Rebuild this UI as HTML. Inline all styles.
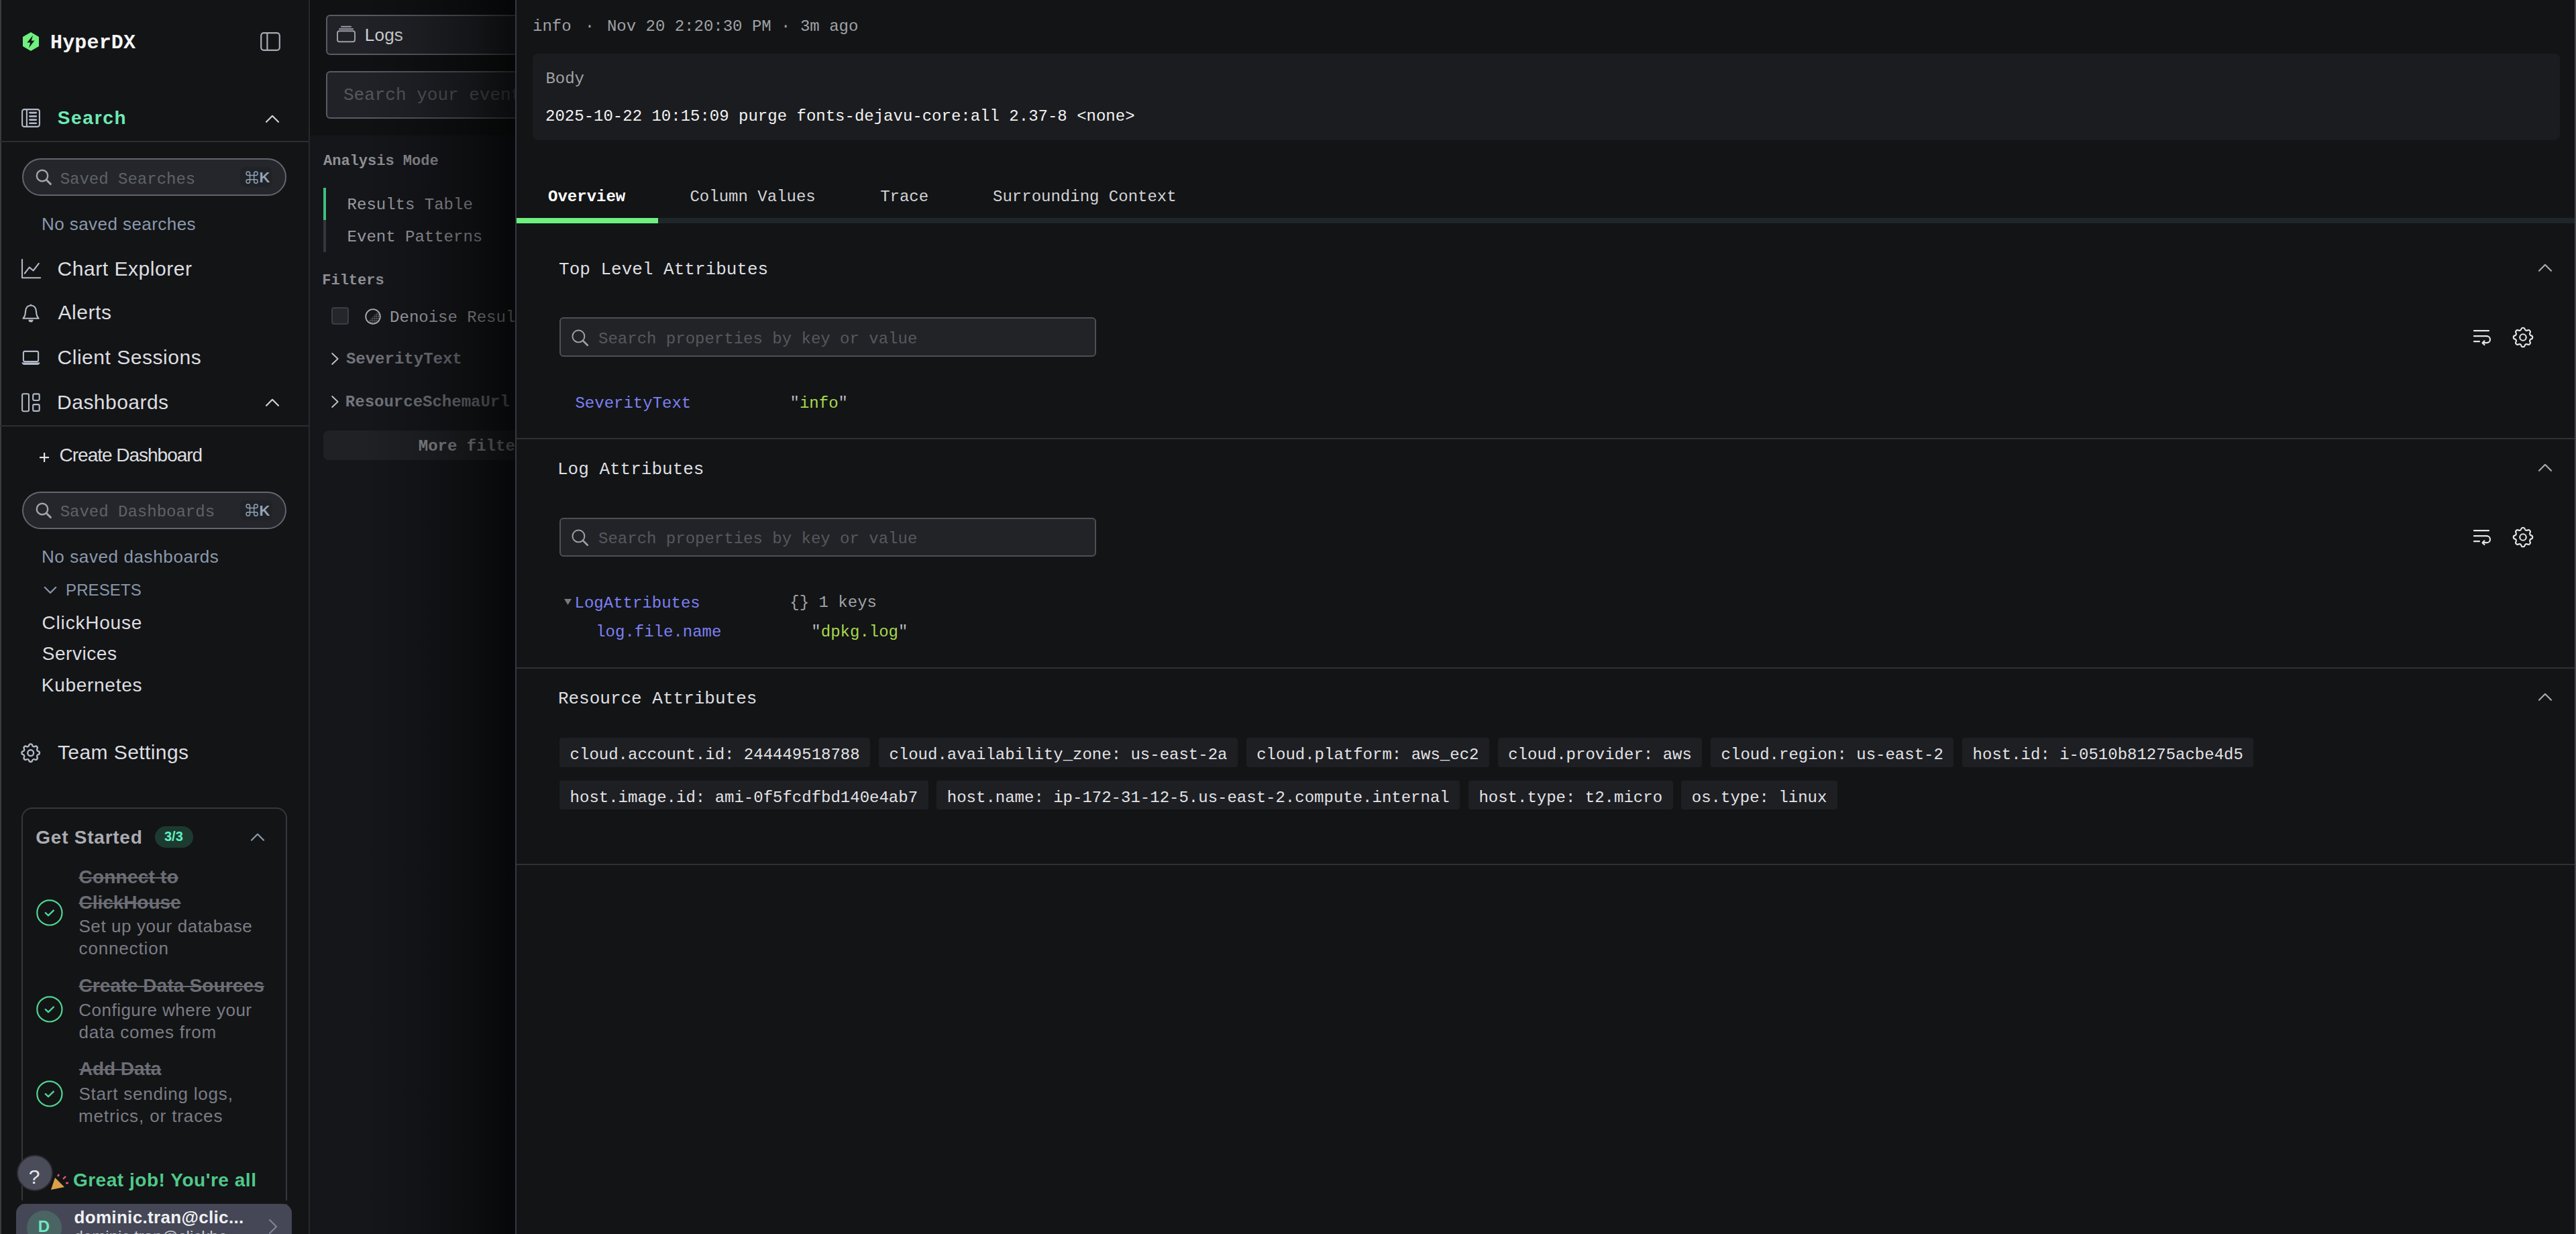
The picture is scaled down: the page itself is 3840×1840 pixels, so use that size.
<!DOCTYPE html>
<html><head><meta charset="utf-8">
<style>
html,body{margin:0;padding:0;background:#131416;overflow:hidden;}
#root{position:relative;width:1920px;height:920px;overflow:hidden;background:#131416;font-family:"Liberation Sans",sans-serif;}
@media (min-width:3000px){#root{zoom:2;}}
.a{position:absolute;}
.t{position:absolute;line-height:1;white-space:nowrap;}
svg{position:absolute;overflow:visible;}
.ico{fill:none;stroke-linecap:round;stroke-linejoin:round;}
.pill{position:absolute;border:1px solid #64646e;background:#25262b;border-radius:14px;box-sizing:border-box;}
.kbd{position:absolute;background:#1f2226;border-radius:4px;}
.inp{position:absolute;background:#222327;border:1px solid #4d4f56;border-radius:3px;box-sizing:border-box;}
.chip{position:absolute;height:21.8px;background:#1e1f23;border-radius:2px;color:#e2e3e6;font-size:12px;line-height:25.6px;padding:0 7.8px;font-family:"Liberation Mono",monospace;white-space:nowrap;box-sizing:border-box;}
</style></head><body><div id="root">
<div class="a" style="left:0;top:0;width:230px;height:920px;background:#131416;"></div>
<div class="a" style="left:0;top:0;width:1px;height:920px;background:#3a3b3f;"></div>
<div class="a" style="left:230px;top:0;width:1px;height:920px;background:#25282c;"></div>
<svg style="left:17px;top:24px" width="12" height="14" viewBox="0 0 12 14"><path d="M6 0 L12 3.5 L12 10.5 L6 14 L0 10.5 L0 3.5 Z" fill="#6ff07f"/><path d="M7.5 2.4 L3.2 7.8 L5.6 7.7 L4.5 11.7 L8.7 6.3 L6.4 6.4 Z" fill="#131416"/></svg>
<div class="t" style="left:37.52px;top:24.51px;font-family:'Liberation Mono',monospace;font-size:15px;font-weight:bold;color:#f4f5f6;letter-spacing:0.079px;">HyperDX</div>
<svg style="left:194px;top:24px" width="15" height="14" viewBox="0 0 15 14"><rect x="0.6" y="0.6" width="13.8" height="12.8" rx="2" class="ico" stroke="#a7aab2" stroke-width="1.1"/><line x1="5.2" y1="0.6" x2="5.2" y2="13.4" class="ico" stroke="#a7aab2" stroke-width="1.1"/></svg>
<svg style="left:16px;top:81px" width="14" height="14" viewBox="0 0 14 14"><rect x="0.55" y="0.55" width="12.9" height="12.9" rx="1.6" class="ico" stroke-width="1.05" stroke="#b2b9c7"/><line x1="3.95" y1="0.6" x2="3.95" y2="13.4" class="ico" stroke-width="1.05" stroke="#b2b9c7"/><line x1="6.2" y1="3.05" x2="10.9" y2="3.05" class="ico" stroke="#b2b9c7" stroke-width="1.3"/><line x1="6.2" y1="5.7" x2="10.9" y2="5.7" class="ico" stroke="#b2b9c7" stroke-width="1.3"/><line x1="6.2" y1="8.3" x2="10.9" y2="8.3" class="ico" stroke="#b2b9c7" stroke-width="1.3"/><line x1="6.2" y1="10.9" x2="10.9" y2="10.9" class="ico" stroke="#b2b9c7" stroke-width="1.3"/></svg>
<div class="t" style="left:42.83px;top:80.95px;font-family:'Liberation Sans',sans-serif;font-size:14px;font-weight:bold;color:#6ee9b3;letter-spacing:0.864px;">Search</div>
<svg style="left:198px;top:85.5px" width="10" height="6" viewBox="0 0 10 6"><polyline points="0.5,5.4 5,0.9 9.5,5.4" class="ico" stroke="#d0d2d6" stroke-width="1.1"/></svg>
<div class="a" style="left:0;top:105px;width:230px;height:1px;background:#2c2e33;"></div>
<div class="pill" style="left:16.5px;top:118.0px;width:197px;height:28px;"></div>
<svg style="left:26.5px;top:126.0px" width="12" height="12" viewBox="0 0 12 12"><circle cx="5" cy="5" r="4.1" class="ico" stroke="#a0a4ac" stroke-width="1.2"/><line x1="8.1" y1="8.1" x2="11.2" y2="11.2" class="ico" stroke="#a0a4ac" stroke-width="1.5"/></svg>
<div class="kbd" style="left:179px;top:124.5px;width:24px;height:15px;"></div>
<div class="t" style="left:44.82px;top:127.81px;font-family:'Liberation Mono',monospace;font-size:12px;font-weight:normal;color:#5f6268;">Saved Searches</div>
<svg style="left:183.6px;top:127.8px" width="8.6" height="8.6" viewBox="0 0 10 10"><path d="M3.2 3.2 V1.6 A1.6 1.6 0 1 0 1.6 3.2 H8.4 A1.6 1.6 0 1 0 6.8 1.6 V8.4 A1.6 1.6 0 1 0 8.4 6.8 H1.6 A1.6 1.6 0 1 0 3.2 8.4 Z" fill="none" stroke="#94a3b8" stroke-width="0.8"/></svg>
<div class="t" style="left:193.19px;top:127.09px;font-family:'Liberation Sans',sans-serif;font-size:11px;font-weight:bold;color:#94a3b8;">K</div>
<div class="t" style="left:30.96px;top:160.49px;font-family:'Liberation Sans',sans-serif;font-size:13px;font-weight:normal;color:#8a99ad;letter-spacing:0.223px;">No saved searches</div>
<svg style="left:16px;top:193.4px" width="14" height="14" viewBox="0 0 14 14"><polyline points="0.5,0 0.5,13.6 14.1,13.6" class="ico" stroke-width="1.05" stroke="#b2b9c7"/><polyline points="2.4,10.3 5.9,5.8 8.8,8.25 12.9,2.9" class="ico" stroke-width="1.05" stroke="#b2b9c7"/></svg>
<div class="t" style="left:42.75px;top:192.80px;font-family:'Liberation Sans',sans-serif;font-size:15px;font-weight:normal;color:#dddee1;letter-spacing:0.273px;">Chart Explorer</div>
<svg style="left:16px;top:226px" width="14" height="15" viewBox="0 0 14 15"><path d="M7 1.6 C4.3 1.8 3.1 3.6 3 6.3 C2.9 8.6 2.6 10 1.2 11.4 L12.8 11.4 C11.4 10 11.1 8.6 11 6.3 C10.9 3.6 9.7 1.8 7 1.6 Z" class="ico" stroke-width="1.05" stroke="#b2b9c7"/><path d="M5.2 12.4 L8.8 12.4 A1.8 1.8 0 0 1 5.2 12.4 Z" fill="#b2b9c7"/><path d="M6.1 1.9 L7 0.6 L7.9 1.9 Z" fill="#b2b9c7"/></svg>
<div class="t" style="left:43.20px;top:225.60px;font-family:'Liberation Sans',sans-serif;font-size:15px;font-weight:normal;color:#dddee1;letter-spacing:0.290px;">Alerts</div>
<svg style="left:16px;top:261px" width="14" height="11" viewBox="0 0 14 11"><rect x="1.45" y="0.95" width="11.1" height="7.6" rx="1" class="ico" stroke-width="1.05" stroke="#b2b9c7"/><path d="M0.2 9.3 L13.8 9.3 C13.6 10.4 13 10.95 12.2 10.95 L1.8 10.95 C1 10.95 0.4 10.4 0.2 9.3 Z" fill="#b2b9c7"/></svg>
<div class="t" style="left:42.75px;top:258.95px;font-family:'Liberation Sans',sans-serif;font-size:15px;font-weight:normal;color:#dddee1;letter-spacing:0.266px;">Client Sessions</div>
<svg style="left:16px;top:293px" width="14" height="14" viewBox="0 0 14 14"><rect x="0.55" y="0.6" width="4.95" height="13" rx="1" class="ico" stroke-width="1.05" stroke="#b2b9c7"/><rect x="8.6" y="0.7" width="4.75" height="4.8" rx="1" class="ico" stroke-width="1.05" stroke="#b2b9c7"/><rect x="8.6" y="8.55" width="4.75" height="4.9" rx="1" class="ico" stroke-width="1.05" stroke="#b2b9c7"/></svg>
<div class="t" style="left:42.55px;top:292.30px;font-family:'Liberation Sans',sans-serif;font-size:15px;font-weight:normal;color:#dddee1;letter-spacing:0.236px;">Dashboards</div>
<svg style="left:198px;top:297px" width="10" height="6" viewBox="0 0 10 6"><polyline points="0.5,5.4 5,0.9 9.5,5.4" class="ico" stroke="#d0d2d6" stroke-width="1.1"/></svg>
<div class="a" style="left:0;top:317px;width:230px;height:1px;background:#2c2e33;"></div>
<svg style="left:29.5px;top:337.6px" width="7" height="7" viewBox="0 0 7 7"><line x1="3.55" y1="0" x2="3.55" y2="7" stroke="#dfe1e5" stroke-width="1.1"/><line x1="0" y1="3.55" x2="7" y2="3.55" stroke="#dfe1e5" stroke-width="1.1"/></svg>
<div class="t" style="left:44.30px;top:332.65px;font-family:'Liberation Sans',sans-serif;font-size:14px;font-weight:normal;color:#dddee1;letter-spacing:-0.508px;">Create Dashboard</div>
<div class="pill" style="left:16.5px;top:366.35px;width:197px;height:28px;"></div>
<svg style="left:26.5px;top:374.35px" width="12" height="12" viewBox="0 0 12 12"><circle cx="5" cy="5" r="4.1" class="ico" stroke="#a0a4ac" stroke-width="1.2"/><line x1="8.1" y1="8.1" x2="11.2" y2="11.2" class="ico" stroke="#a0a4ac" stroke-width="1.5"/></svg>
<div class="kbd" style="left:179px;top:372.85px;width:24px;height:15px;"></div>
<div class="t" style="left:44.82px;top:376.06px;font-family:'Liberation Mono',monospace;font-size:12px;font-weight:normal;color:#5f6268;">Saved Dashboards</div>
<svg style="left:183.6px;top:376.1px" width="8.6" height="8.6" viewBox="0 0 10 10"><path d="M3.2 3.2 V1.6 A1.6 1.6 0 1 0 1.6 3.2 H8.4 A1.6 1.6 0 1 0 6.8 1.6 V8.4 A1.6 1.6 0 1 0 8.4 6.8 H1.6 A1.6 1.6 0 1 0 3.2 8.4 Z" fill="none" stroke="#94a3b8" stroke-width="0.8"/></svg>
<div class="t" style="left:193.19px;top:375.34px;font-family:'Liberation Sans',sans-serif;font-size:11px;font-weight:bold;color:#94a3b8;">K</div>
<div class="t" style="left:30.96px;top:408.49px;font-family:'Liberation Sans',sans-serif;font-size:13px;font-weight:normal;color:#8a99ad;letter-spacing:0.306px;">No saved dashboards</div>
<svg style="left:33px;top:437.5px" width="9" height="5" viewBox="0 0 9 5"><polyline points="0.4,0.4 4.5,4.5 8.6,0.4" class="ico" stroke="#8a99ad" stroke-width="1.1"/></svg>
<div class="t" style="left:49.04px;top:433.84px;font-family:'Liberation Sans',sans-serif;font-size:12px;font-weight:normal;color:#8a99ad;letter-spacing:0.045px;">PRESETS</div>
<div class="t" style="left:31.30px;top:457.45px;font-family:'Liberation Sans',sans-serif;font-size:14px;font-weight:normal;color:#dddee1;letter-spacing:0.396px;">ClickHouse</div>
<div class="t" style="left:31.37px;top:480.65px;font-family:'Liberation Sans',sans-serif;font-size:14px;font-weight:normal;color:#dddee1;letter-spacing:0.276px;">Services</div>
<div class="t" style="left:30.88px;top:504.05px;font-family:'Liberation Sans',sans-serif;font-size:14px;font-weight:normal;color:#dddee1;letter-spacing:0.361px;">Kubernetes</div>
<svg style="left:14.2px;top:552.3px" width="17.7" height="17.7" viewBox="0 0 24 24"><path d="M10.325 4.317c.426 -1.756 2.924 -1.756 3.35 0a1.724 1.724 0 0 0 2.573 1.066c1.543 -.94 3.31 .826 2.37 2.37a1.724 1.724 0 0 0 1.065 2.572c1.756 .426 1.756 2.924 0 3.35a1.724 1.724 0 0 0 -1.066 2.573c.94 1.543 -.826 3.31 -2.37 2.37a1.724 1.724 0 0 0 -2.572 1.065c-.426 1.756 -2.924 1.756 -3.35 0a1.724 1.724 0 0 0 -2.573 -1.066c-1.543 .94 -3.31 -.826 -2.37 -2.37a1.724 1.724 0 0 0 -1.065 -2.572c-1.756 -.426 -1.756 -2.924 0 -3.35a1.724 1.724 0 0 0 1.066 -2.573c-.94 -1.543 .826 -3.31 2.37 -2.37c1 .608 2.296 .07 2.572 -1.065z" class="ico" stroke="#b2b9c7" stroke-width="1.6"/><circle cx="12" cy="12" r="3" class="ico" stroke="#b2b9c7" stroke-width="1.6"/></svg>
<div class="t" style="left:42.95px;top:553.70px;font-family:'Liberation Sans',sans-serif;font-size:15px;font-weight:normal;color:#dddee1;letter-spacing:0.212px;">Team Settings</div>
<div class="a" style="left:16.2px;top:602.2px;width:197.8px;height:330px;border:1px solid #35373d;border-radius:8px;box-sizing:border-box;"></div>
<div class="t" style="left:26.64px;top:617.40px;font-family:'Liberation Sans',sans-serif;font-size:14px;font-weight:bold;color:#abacb2;letter-spacing:0.381px;">Get Started</div>
<div class="a" style="left:115.5px;top:616px;width:28.5px;height:16px;border-radius:8px;background:#1d3a30;"></div>
<div class="t" style="left:122.50px;top:618.53px;font-family:'Liberation Sans',sans-serif;font-size:10px;font-weight:bold;color:#62efc2;">3/3</div>
<svg style="left:187px;top:621px" width="10" height="6" viewBox="0 0 10 6"><polyline points="0.5,5.4 5,0.9 9.5,5.4" class="ico" stroke="#8a9bb0" stroke-width="1.1"/></svg>
<svg style="left:27px;top:670.45px" width="20" height="20" viewBox="0 0 20 20"><circle cx="9.95" cy="9.95" r="9.3" fill="none" stroke="#4fd691" stroke-width="1.1"/><polyline points="6.9,10.1 9,12.1 12.9,8.3" fill="none" stroke="#4fd691" stroke-width="1.2" stroke-linecap="round" stroke-linejoin="round"/></svg>
<svg style="left:27px;top:742.6px" width="20" height="20" viewBox="0 0 20 20"><circle cx="9.95" cy="9.95" r="9.3" fill="none" stroke="#4fd691" stroke-width="1.1"/><polyline points="6.9,10.1 9,12.1 12.9,8.3" fill="none" stroke="#4fd691" stroke-width="1.2" stroke-linecap="round" stroke-linejoin="round"/></svg>
<svg style="left:27px;top:805.3px" width="20" height="20" viewBox="0 0 20 20"><circle cx="9.95" cy="9.95" r="9.3" fill="none" stroke="#4fd691" stroke-width="1.1"/><polyline points="6.9,10.1 9,12.1 12.9,8.3" fill="none" stroke="#4fd691" stroke-width="1.2" stroke-linecap="round" stroke-linejoin="round"/></svg>
<div class="t" style="left:58.74px;top:647.15px;font-family:'Liberation Sans',sans-serif;font-size:14px;font-weight:bold;color:#6c6d75;letter-spacing:0.116px;text-decoration:line-through;text-decoration-thickness:1px;">Connect to</div>
<div class="t" style="left:58.74px;top:666.15px;font-family:'Liberation Sans',sans-serif;font-size:14px;font-weight:bold;color:#6c6d75;letter-spacing:-0.020px;text-decoration:line-through;text-decoration-thickness:1px;">ClickHouse</div>
<div class="t" style="left:58.71px;top:684.14px;font-family:'Liberation Sans',sans-serif;font-size:13px;font-weight:normal;color:#7b7c85;letter-spacing:0.295px;">Set up your database</div>
<div class="t" style="left:58.78px;top:700.74px;font-family:'Liberation Sans',sans-serif;font-size:13px;font-weight:normal;color:#7b7c85;letter-spacing:0.423px;">connection</div>
<div class="t" style="left:58.74px;top:728.15px;font-family:'Liberation Sans',sans-serif;font-size:14px;font-weight:bold;color:#6c6d75;letter-spacing:0.067px;text-decoration:line-through;text-decoration-thickness:1px;">Create Data Sources</div>
<div class="t" style="left:58.65px;top:746.34px;font-family:'Liberation Sans',sans-serif;font-size:13px;font-weight:normal;color:#7b7c85;letter-spacing:0.240px;">Configure where your</div>
<div class="t" style="left:58.78px;top:762.99px;font-family:'Liberation Sans',sans-serif;font-size:13px;font-weight:normal;color:#7b7c85;letter-spacing:0.394px;">data comes from</div>
<div class="t" style="left:58.95px;top:790.15px;font-family:'Liberation Sans',sans-serif;font-size:14px;font-weight:bold;color:#6c6d75;letter-spacing:-0.036px;text-decoration:line-through;text-decoration-thickness:1px;">Add Data</div>
<div class="t" style="left:58.71px;top:808.79px;font-family:'Liberation Sans',sans-serif;font-size:13px;font-weight:normal;color:#7b7c85;letter-spacing:0.392px;">Start sending logs,</div>
<div class="t" style="left:58.45px;top:825.49px;font-family:'Liberation Sans',sans-serif;font-size:13px;font-weight:normal;color:#7b7c85;letter-spacing:0.446px;">metrics, or traces</div>
<div class="a" style="left:12.5px;top:861px;width:27px;height:27px;border-radius:50%;background:#4a4c5a;border:1px solid #2c2d33;box-sizing:border-box;"></div>
<div class="t" style="left:21.40px;top:869.80px;font-family:'Liberation Sans',sans-serif;font-size:15px;font-weight:normal;color:#e8e9ec;">?</div>
<div class="t" style="left:54.44px;top:873.15px;font-family:'Liberation Sans',sans-serif;font-size:14px;font-weight:bold;color:#4fc98a;letter-spacing:0.268px;">Great job! You're all</div>
<svg style="left:37px;top:875px" width="15" height="13" viewBox="0 0 15 13"><path d="M1 12 L4 3 L11 10 Z" fill="#d9a04a"/><path d="M6 2 l1 -1.5 M10 4 l2 -2 M12 7 l2 0" stroke="#e05a7a" stroke-width="1.2"/></svg>
<div class="a" style="left:12.2px;top:897.3px;width:205.5px;height:40px;border-radius:7px;background:#454756;"></div>
<div class="a" style="left:20px;top:902.5px;width:26px;height:26px;border-radius:50%;background:#4a6464;"></div>
<div class="t" style="left:28.42px;top:908.34px;font-family:'Liberation Sans',sans-serif;font-size:12px;font-weight:bold;color:#6ee9c0;">D</div>
<div class="t" style="left:55.23px;top:900.79px;font-family:'Liberation Sans',sans-serif;font-size:13px;font-weight:bold;color:#f0f1f3;letter-spacing:0.168px;">dominic.tran@clic...</div>
<div class="t" style="left:55.27px;top:915.84px;font-family:'Liberation Sans',sans-serif;font-size:12px;font-weight:normal;color:#c6c8cf;">dominic.tran@clickho...</div>
<svg style="left:200.5px;top:909px" width="6" height="11" viewBox="0 0 6 11"><polyline points="0.5,0.5 5.5,5.5 0.5,10.5" class="ico" stroke-width="1.05" stroke="#80869a"/></svg>
<div class="a" style="left:12.2px;top:895px;width:205.5px;height:2.3px;background:#131416;"></div>
<div class="a" style="left:231px;top:0;width:153px;height:920px;background:#15161a;"></div>
<div class="a" style="left:231px;top:0;width:153px;height:100.8px;background:#101113;"></div>
<div class="inp" style="left:243.2px;top:11px;width:200px;height:30px;background:#212227;border-color:#595b65;border-radius:3px;"></div>
<svg style="left:251px;top:19.5px" width="14" height="12" viewBox="0 0 14 12"><line x1="3.5" y1="0.4" x2="10.5" y2="0.4" class="ico" stroke="#9c9ea6" stroke-width="1"/><line x1="2" y1="2.1" x2="12" y2="2.1" class="ico" stroke="#9c9ea6" stroke-width="1"/><rect x="0.5" y="3.6" width="13" height="8" rx="1.5" class="ico" stroke="#9c9ea6" stroke-width="1"/></svg>
<div class="t" style="left:271.86px;top:19.64px;font-family:'Liberation Sans',sans-serif;font-size:13px;font-weight:normal;color:#d4d5d9;letter-spacing:0.128px;">Logs</div>
<div class="inp" style="left:243.2px;top:53.2px;width:200px;height:35.5px;background:#212227;border-color:#595b65;border-radius:3px;"></div>
<div class="t" style="left:255.98px;top:64.49px;font-family:'Liberation Mono',monospace;font-size:13px;font-weight:normal;color:#56585f;">Search your event</div>
<div class="t" style="left:241.00px;top:115.07px;font-family:'Liberation Mono',monospace;font-size:11px;font-weight:bold;color:#8f9096;">Analysis Mode</div>
<div class="a" style="left:241px;top:140px;width:2px;height:24px;background:#3dbf7f;"></div>
<div class="a" style="left:241px;top:164px;width:2px;height:24px;background:#34363b;"></div>
<div class="t" style="left:258.79px;top:146.91px;font-family:'Liberation Mono',monospace;font-size:12px;font-weight:normal;color:#9a9ba1;">Results Table</div>
<div class="t" style="left:258.79px;top:170.76px;font-family:'Liberation Mono',monospace;font-size:12px;font-weight:normal;color:#9a9ba1;">Event Patterns</div>
<div class="t" style="left:240.12px;top:203.87px;font-family:'Liberation Mono',monospace;font-size:11px;font-weight:bold;color:#8f9096;">Filters</div>
<div class="a" style="left:247px;top:229px;width:12.8px;height:12.8px;border-radius:2px;background:#25262b;border:1px solid #3b3d43;box-sizing:border-box;"></div>
<svg style="left:271.8px;top:229.8px" width="12" height="12" viewBox="0 0 12 12"><defs><pattern id="hp" width="1.4" height="1.4" patternUnits="userSpaceOnUse"><rect width="0.7" height="0.7" fill="#a0a2a8"/></pattern></defs><path d="M10 2 A5.4 5.4 0 0 1 2 10 Z" fill="url(#hp)"/><circle cx="6" cy="6" r="5.4" fill="none" stroke="#b0b2b8" stroke-width="0.9"/></svg>
<div class="t" style="left:290.54px;top:231.11px;font-family:'Liberation Mono',monospace;font-size:12px;font-weight:normal;color:#a3a4a9;">Denoise Resul</div>
<svg style="left:247px;top:262.8px" width="6" height="9" viewBox="0 0 6 9"><polyline points="0.6,0.5 4.8,4.5 0.6,8.5" class="ico" stroke="#c0c2c8" stroke-width="0.95"/></svg>
<div class="t" style="left:257.96px;top:261.81px;font-family:'Liberation Mono',monospace;font-size:12px;font-weight:bold;color:#73757d;">SeverityText</div>
<svg style="left:247px;top:294.8px" width="6" height="9" viewBox="0 0 6 9"><polyline points="0.6,0.5 4.8,4.5 0.6,8.5" class="ico" stroke="#c0c2c8" stroke-width="0.95"/></svg>
<div class="t" style="left:257.42px;top:293.81px;font-family:'Liberation Mono',monospace;font-size:12px;font-weight:bold;color:#73757d;">ResourceSchemaUrl</div>
<div class="a" style="left:241px;top:321px;width:200px;height:21.8px;border-radius:4px;background:#202125;"></div>
<div class="t" style="left:311.90px;top:327.06px;font-family:'Liberation Mono',monospace;font-size:12px;font-weight:bold;color:#8c8d93;">More filters</div>
<div class="a" style="left:231px;top:0;width:153px;height:920px;background:linear-gradient(to right,rgba(0,0,0,0) 25%,rgba(0,0,0,0.14) 50%,rgba(0,0,0,0.38) 78%,rgba(0,0,0,0.68) 100%);"></div>
<div class="a" style="left:384px;top:0;width:1536px;height:920px;background:#131416;"></div>
<div class="a" style="left:384px;top:0;width:1px;height:920px;background:#333844;"></div>
<div class="a" style="left:1919px;top:0;width:1px;height:920px;background:#46484e;"></div>
<div class="t" style="left:397.01px;top:14.21px;font-family:'Liberation Mono',monospace;font-size:12px;font-weight:normal;color:#9fa1a6;">info</div>
<div class="t" style="left:435.87px;top:14.21px;font-family:'Liberation Mono',monospace;font-size:12px;font-weight:normal;color:#9fa1a6;">·</div>
<div class="t" style="left:452.44px;top:14.21px;font-family:'Liberation Mono',monospace;font-size:12px;font-weight:normal;color:#9fa1a6;">Nov 20 2:20:30 PM · 3m ago</div>
<div class="a" style="left:397px;top:40px;width:1510.75px;height:64.3px;border-radius:4px;background:#1b1c1f;"></div>
<div class="t" style="left:406.69px;top:53.11px;font-family:'Liberation Mono',monospace;font-size:12px;font-weight:normal;color:#a0a2a7;">Body</div>
<div class="t" style="left:406.51px;top:81.06px;font-family:'Liberation Mono',monospace;font-size:12px;font-weight:normal;color:#f2f3f4;">2025-10-22 10:15:09 purge fonts-dejavu-core:all 2.37-8 &lt;none&gt;</div>
<div class="t" style="left:408.53px;top:140.91px;font-family:'Liberation Mono',monospace;font-size:12px;font-weight:bold;color:#ffffff;">Overview</div>
<div class="t" style="left:514.24px;top:140.91px;font-family:'Liberation Mono',monospace;font-size:12px;font-weight:normal;color:#d2d3d6;">Column Values</div>
<div class="t" style="left:656.08px;top:140.91px;font-family:'Liberation Mono',monospace;font-size:12px;font-weight:normal;color:#d2d3d6;">Trace</div>
<div class="t" style="left:740.02px;top:140.91px;font-family:'Liberation Mono',monospace;font-size:12px;font-weight:normal;color:#d2d3d6;">Surrounding Context</div>
<div class="a" style="left:385px;top:162.5px;width:1534px;height:4px;background:#1e2629;"></div>
<div class="a" style="left:385px;top:162.5px;width:105.5px;height:4px;background:#6ef080;"></div>
<div class="t" style="left:416.55px;top:194.69px;font-family:'Liberation Mono',monospace;font-size:13px;font-weight:normal;color:#dedfe2;">Top Level Attributes</div>
<svg style="left:1891.8px;top:196.5px" width="10" height="6" viewBox="0 0 10 6"><polyline points="0.5,5.4 5,0.9 9.5,5.4" class="ico" stroke="#a8aab0" stroke-width="1.1"/></svg>
<div class="inp" style="left:417px;top:236.7px;width:400px;height:29.3px;"></div>
<svg style="left:425.8px;top:245.5px" width="12.5" height="12.5" viewBox="0 0 12 12"><circle cx="5" cy="5" r="4.3" fill="none" stroke="#9fa1a7" stroke-width="0.95"/><line x1="8.2" y1="8.2" x2="11.4" y2="11.4" stroke="#9fa1a7" stroke-width="1.3" stroke-linecap="round"/></svg>
<div class="t" style="left:446.02px;top:246.81px;font-family:'Liberation Mono',monospace;font-size:12px;font-weight:normal;color:#56585e;">Search properties by key or value</div>
<svg style="left:1843.5px;top:246px" width="12" height="11" viewBox="0 0 12 11"><line x1="0.5" y1="0.6" x2="11.5" y2="0.6" stroke="#e3e4e7" stroke-width="1.1" stroke-linecap="round"/><line x1="0.5" y1="4.6" x2="10" y2="4.6" stroke="#e3e4e7" stroke-width="1.1" stroke-linecap="round"/><path d="M10 4.6 a2.5 2.5 0 0 1 0 5 h-3" fill="none" stroke="#e3e4e7" stroke-width="1.1" stroke-linecap="round"/><polyline points="8.2,8.2 6.8,9.6 8.2,11" fill="none" stroke="#e3e4e7" stroke-width="1.1" stroke-linecap="round" stroke-linejoin="round"/><line x1="0.5" y1="8.6" x2="4.5" y2="8.6" stroke="#e3e4e7" stroke-width="1.1" stroke-linecap="round"/></svg>
<svg style="left:1870.8px;top:242px" width="19" height="19" viewBox="0 0 24 24"><path d="M10.325 4.317c.426 -1.756 2.924 -1.756 3.35 0a1.724 1.724 0 0 0 2.573 1.066c1.543 -.94 3.31 .826 2.37 2.37a1.724 1.724 0 0 0 1.065 2.572c1.756 .426 1.756 2.924 0 3.35a1.724 1.724 0 0 0 -1.066 2.573c.94 1.543 -.826 3.31 -2.37 2.37a1.724 1.724 0 0 0 -2.572 1.065c-.426 1.756 -2.924 1.756 -3.35 0a1.724 1.724 0 0 0 -2.573 -1.066c-1.543 .94 -3.31 -.826 -2.37 -2.37a1.724 1.724 0 0 0 -1.065 -2.572c-1.756 -.426 -1.756 -2.924 0 -3.35a1.724 1.724 0 0 0 1.066 -2.573c-.94 -1.543 .826 -3.31 2.37 -2.37c1 .608 2.296 .07 2.572 -1.065z" fill="none" stroke="#e3e4e7" stroke-width="1.35"/><circle cx="12" cy="12" r="3" fill="none" stroke="#e3e4e7" stroke-width="1.35"/></svg>
<div class="t" style="left:428.72px;top:294.81px;font-family:'Liberation Mono',monospace;font-size:12px;font-weight:normal;color:#7c80f3;">SeverityText</div>
<div class="t" style="left:588.78px;top:294.81px;font-family:'Liberation Mono',monospace;font-size:12px;font-weight:normal;color:#b8b9bd;">"<span style='color:#a8d94c'>info</span>"</div>
<div class="a" style="left:385px;top:326.5px;width:1534px;height:1px;background:#2f3136;"></div>
<div class="t" style="left:415.50px;top:343.39px;font-family:'Liberation Mono',monospace;font-size:13px;font-weight:normal;color:#dedfe2;">Log Attributes</div>
<svg style="left:1891.8px;top:345.3px" width="10" height="6" viewBox="0 0 10 6"><polyline points="0.5,5.4 5,0.9 9.5,5.4" class="ico" stroke="#a8aab0" stroke-width="1.1"/></svg>
<div class="inp" style="left:417px;top:385.9px;width:400px;height:29.3px;"></div>
<svg style="left:425.8px;top:394.7px" width="12.5" height="12.5" viewBox="0 0 12 12"><circle cx="5" cy="5" r="4.3" fill="none" stroke="#9fa1a7" stroke-width="0.95"/><line x1="8.2" y1="8.2" x2="11.4" y2="11.4" stroke="#9fa1a7" stroke-width="1.3" stroke-linecap="round"/></svg>
<div class="t" style="left:446.02px;top:396.01px;font-family:'Liberation Mono',monospace;font-size:12px;font-weight:normal;color:#56585e;">Search properties by key or value</div>
<svg style="left:1843.5px;top:395px" width="12" height="11" viewBox="0 0 12 11"><line x1="0.5" y1="0.6" x2="11.5" y2="0.6" stroke="#e3e4e7" stroke-width="1.1" stroke-linecap="round"/><line x1="0.5" y1="4.6" x2="10" y2="4.6" stroke="#e3e4e7" stroke-width="1.1" stroke-linecap="round"/><path d="M10 4.6 a2.5 2.5 0 0 1 0 5 h-3" fill="none" stroke="#e3e4e7" stroke-width="1.1" stroke-linecap="round"/><polyline points="8.2,8.2 6.8,9.6 8.2,11" fill="none" stroke="#e3e4e7" stroke-width="1.1" stroke-linecap="round" stroke-linejoin="round"/><line x1="0.5" y1="8.6" x2="4.5" y2="8.6" stroke="#e3e4e7" stroke-width="1.1" stroke-linecap="round"/></svg>
<svg style="left:1870.8px;top:391.2px" width="19" height="19" viewBox="0 0 24 24"><path d="M10.325 4.317c.426 -1.756 2.924 -1.756 3.35 0a1.724 1.724 0 0 0 2.573 1.066c1.543 -.94 3.31 .826 2.37 2.37a1.724 1.724 0 0 0 1.065 2.572c1.756 .426 1.756 2.924 0 3.35a1.724 1.724 0 0 0 -1.066 2.573c.94 1.543 -.826 3.31 -2.37 2.37a1.724 1.724 0 0 0 -2.572 1.065c-.426 1.756 -2.924 1.756 -3.35 0a1.724 1.724 0 0 0 -2.573 -1.066c-1.543 .94 -3.31 -.826 -2.37 -2.37a1.724 1.724 0 0 0 -1.065 -2.572c-1.756 -.426 -1.756 -2.924 0 -3.35a1.724 1.724 0 0 0 1.066 -2.573c-.94 -1.543 .826 -3.31 2.37 -2.37c1 .608 2.296 .07 2.572 -1.065z" fill="none" stroke="#e3e4e7" stroke-width="1.35"/><circle cx="12" cy="12" r="3" fill="none" stroke="#e3e4e7" stroke-width="1.35"/></svg>
<svg style="left:420.7px;top:446.3px" width="5.5" height="4.5" viewBox="0 0 5.5 4.5"><path d="M0 0 L5.5 0 L2.75 4.5 Z" fill="#77797f"/></svg>
<div class="t" style="left:428.27px;top:444.01px;font-family:'Liberation Mono',monospace;font-size:12px;font-weight:normal;color:#7c80f3;">LogAttributes</div>
<div class="t" style="left:588.68px;top:443.31px;font-family:'Liberation Mono',monospace;font-size:12px;font-weight:normal;color:#a1a2a7;">{} 1 keys</div>
<div class="t" style="left:444.09px;top:465.66px;font-family:'Liberation Mono',monospace;font-size:12px;font-weight:normal;color:#7c80f3;">log.file.name</div>
<div class="t" style="left:604.68px;top:465.66px;font-family:'Liberation Mono',monospace;font-size:12px;font-weight:normal;color:#b8b9bd;">"<span style='color:#a8d94c'>dpkg.log</span>"</div>
<div class="a" style="left:385px;top:497.5px;width:1534px;height:1px;background:#2f3136;"></div>
<div class="t" style="left:415.96px;top:514.54px;font-family:'Liberation Mono',monospace;font-size:13px;font-weight:normal;color:#dedfe2;">Resource Attributes</div>
<svg style="left:1891.8px;top:516.5px" width="10" height="6" viewBox="0 0 10 6"><polyline points="0.5,5.4 5,0.9 9.5,5.4" class="ico" stroke="#a8aab0" stroke-width="1.1"/></svg>
<div class="chip" style="left:417.00px;top:550.1px;width:231.60px;">cloud.account.id: 244449518788</div>
<div class="chip" style="left:654.90px;top:550.1px;width:267.60px;">cloud.availability_zone: us-east-2a</div>
<div class="chip" style="left:928.80px;top:550.1px;width:181.20px;">cloud.platform: aws_ec2</div>
<div class="chip" style="left:1116.30px;top:550.1px;width:152.40px;">cloud.provider: aws</div>
<div class="chip" style="left:1275.00px;top:550.1px;width:181.20px;">cloud.region: us-east-2</div>
<div class="chip" style="left:1462.50px;top:550.1px;width:217.20px;">host.id: i-0510b81275acbe4d5</div>
<div class="chip" style="left:417.00px;top:581.8px;width:274.80px;">host.image.id: ami-0f5fcdfbd140e4ab7</div>
<div class="chip" style="left:698.10px;top:581.8px;width:390.00px;">host.name: ip-172-31-12-5.us-east-2.compute.internal</div>
<div class="chip" style="left:1094.40px;top:581.8px;width:152.40px;">host.type: t2.micro</div>
<div class="chip" style="left:1253.10px;top:581.8px;width:116.40px;">os.type: linux</div>
<div class="a" style="left:385px;top:644.0px;width:1534px;height:1px;background:#2f3136;"></div>
</div></body></html>
